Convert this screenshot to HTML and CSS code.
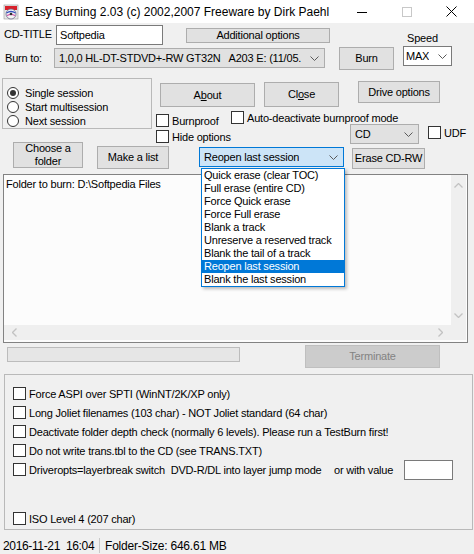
FILE: index.html
```html
<!DOCTYPE html>
<html>
<head>
<meta charset="utf-8">
<title>Easy Burning</title>
<link rel="stylesheet" href="styles.css">
</head>
<body>
<div class="titlebar">
  <svg class="appicon" viewBox="0 0 16 16" width="16" height="16">
    <rect x="1" y="1" width="14" height="14" fill="#e8e8e8" stroke="#9a9a9a" stroke-width="0.6"/>
    <rect x="2" y="2" width="12" height="4" fill="#d8202a"/>
    <circle cx="8" cy="10" r="5" fill="#f4f4f4" stroke="#6a6a8a" stroke-width="0.8"/>
    <path d="M3.5 9 Q8 6 12.5 9" stroke="#3050c0" stroke-width="1.4" fill="none"/>
    <path d="M4 11.5 Q8 9.5 12 11.5" stroke="#d040a0" stroke-width="1.2" fill="none"/>
    <circle cx="8" cy="10" r="1.3" fill="#303030"/>
  </svg>
  <span class="title">Easy Burning 2.03 (c) 2002,2007 Freeware by Dirk Paehl</span>
  <div class="wctrls">
    <span class="wbtn"><svg width="10" height="10" viewBox="0 0 10 10"><path d="M0 5.5H10" stroke="#000" stroke-width="1"/></svg></span>
    <span class="wbtn"><svg width="10" height="10" viewBox="0 0 10 10"><rect x="0.5" y="0.5" width="9" height="9" fill="none" stroke="#c8c8c8"/></svg></span>
    <span class="wbtn"><svg width="11" height="11" viewBox="0 0 11 11"><path d="M0.5 0.5L10.5 10.5M10.5 0.5L0.5 10.5" stroke="#000" stroke-width="1"/></svg></span>
  </div>
</div>

<div class="client">
  <div class="row row1">
    <span class="lbl lbl-cdtitle">CD-TITLE</span>
    <div class="textbox tb-title">Softpedia</div>
    <div class="btn btn-addl">Additional options</div>
    <span class="lbl lbl-speed">Speed</span>
  </div>

  <div class="row row2">
    <span class="lbl lbl-burnto">Burn to:</span>
    <div class="combo combo-drive"><span class="ctext">1,0,0 HL-DT-STDVD+-RW GT32N&nbsp;&nbsp; A203 E: (11/05.</span><svg class="chev" width="9" height="5" viewBox="0 0 9 5"><path d="M0.5 0.5L4.5 4.5L8.5 0.5" fill="none" stroke="#5a5a5a"/></svg></div>
    <div class="btn btn-burn">Burn</div>
    <div class="combo combo-speed"><span class="ctext">MAX</span><svg class="chev" width="9" height="5" viewBox="0 0 9 5"><path d="M0.5 0.5L4.5 4.5L8.5 0.5" fill="none" stroke="#5a5a5a"/></svg></div>
  </div>

  <div class="band1">
    <div class="group radios">
      <div class="radio-row"><span class="radio checked"></span><span>Single session</span></div>
      <div class="radio-row"><span class="radio"></span><span>Start multisession</span></div>
      <div class="radio-row last"><span class="radio"></span><span>Next session</span></div>
    </div>
    <div class="band1-right">
      <div class="r1">
        <div class="btn btn-about">A<u>b</u>out</div>
        <div class="btn btn-close">Cl<u>o</u>se</div>
        <div class="btn btn-drive">Drive options</div>
      </div>
      <div class="r2">
        <div class="chkcol">
          <div class="chk-row burnproof"><span class="chk"></span><span>Burnproof</span></div>
          <div class="chk-row hideopt"><span class="chk"></span><span>Hide options</span></div>
        </div>
        <div class="autocol">
          <div class="chk-row autodeact"><span class="chk"></span><span>Auto-deactivate burnproof mode</span></div>
          <div class="cdrow">
            <div class="combo combo-cd"><span class="ctext">CD</span><svg class="chev" width="9" height="5" viewBox="0 0 9 5"><path d="M0.5 0.5L4.5 4.5L8.5 0.5" fill="none" stroke="#5a5a5a"/></svg></div>
            <div class="chk-row udf"><span class="chk"></span><span>UDF</span></div>
          </div>
        </div>
      </div>
    </div>
  </div>

  <div class="band2">
    <div class="btn btn-choose">Choose a<br>folder</div>
    <div class="btn btn-list">Make a list</div>
    <div class="combo-wrap">
      <div class="combo combo-erase"><span class="ctext">Reopen last session</span><svg class="chev" width="9" height="5" viewBox="0 0 9 5"><path d="M0.5 0.5L4.5 4.5L8.5 0.5" fill="none" stroke="#5a5a5a"/></svg></div>
      <ul class="dropdown">
        <li>Quick erase (clear TOC)</li>
        <li>Full erase (entire CD)</li>
        <li>Force Quick erase</li>
        <li>Force Full erase</li>
        <li>Blank a track</li>
        <li>Unreserve a reserved track</li>
        <li>Blank the tail of a track</li>
        <li class="sel">Reopen last session</li>
        <li>Blank the last session</li>
      </ul>
    </div>
    <div class="btn btn-erase">Erase CD-RW</div>
  </div>

  <div class="listbox">
    <div class="lb-content">Folder to burn: D:\Softpedia Files</div>
    <div class="vscroll">
      <svg width="9" height="5" viewBox="0 0 9 5"><path d="M0.5 4.5L4.5 0.5L8.5 4.5" fill="none" stroke="#c2c2c2" stroke-width="1.3"/></svg>
      <svg width="9" height="5" viewBox="0 0 9 5"><path d="M0.5 0.5L4.5 4.5L8.5 0.5" fill="none" stroke="#c2c2c2" stroke-width="1.3"/></svg>
    </div>
    <div class="hscroll">
      <svg width="5" height="9" viewBox="0 0 5 9"><path d="M4.5 0.5L0.5 4.5L4.5 8.5" fill="none" stroke="#c2c2c2" stroke-width="1.3"/></svg>
      <svg width="5" height="9" viewBox="0 0 5 9"><path d="M0.5 0.5L4.5 4.5L0.5 8.5" fill="none" stroke="#c2c2c2" stroke-width="1.3"/></svg>
    </div>
    <div class="corner"></div>
  </div>

  <div class="row progress-row">
    <div class="progress"></div>
    <div class="btn btn-term">Terminate</div>
  </div>

  <div class="group options">
    <div class="opt-row"><span class="chk"></span><span>Force ASPI over SPTI (WinNT/2K/XP only)</span></div>
    <div class="opt-row"><span class="chk"></span><span>Long Joliet filenames (103 char) - NOT Joliet standard (64 char)</span></div>
    <div class="opt-row"><span class="chk"></span><span>Deactivate folder depth check (normally 6 levels). Please run a TestBurn first!</span></div>
    <div class="opt-row"><span class="chk"></span><span>Do not write trans.tbl to the CD (see TRANS.TXT)</span></div>
    <div class="opt-row"><span class="chk"></span><span class="lj-label">Driveropts=layerbreak switch&nbsp; DVD-R/DL into layer jump mode</span><span class="orval">or with value</span><div class="textbox tb-value"></div></div>
    <div class="opt-row iso"><span class="chk"></span><span>ISO Level 4 (207 char)</span></div>
  </div>

  <div class="statusbar">
    <span class="sb-date">2016-11-21&nbsp; 16:04</span>
    <span class="sb-sep"></span>
    <span class="sb-size">Folder-Size: 646.61 MB</span>
  </div>
</div>
</body>
</html>
```

FILE: styles.css
```css
* { box-sizing: border-box; }
html, body { margin: 0; padding: 0; }
body {
  width: 474px;
  height: 554px;
  overflow: hidden;
  background: #f0f0f0;
  font-family: "Liberation Sans", Arial, sans-serif;
  font-size: 11px;
  letter-spacing: -0.2px;
  color: #000;
}

/* title bar */
.titlebar {
  height: 23px;
  background: #fff;
  display: flex;
  align-items: center;
}
.appicon { margin-left: 3px; flex: none; }
.title {
  margin-left: 6px;
  font-size: 12px;
  letter-spacing: 0;
  white-space: nowrap;
}
.wctrls { margin-left: auto; display: flex; height: 23px; }
.wbtn {
  width: 45px;
  height: 23px;
  display: flex;
  align-items: center;
  justify-content: center;
}

/* generic */
.row { display: flex; align-items: flex-start; }
.lbl { line-height: 13px; white-space: nowrap; flex: none; }
.btn {
  flex: none;
  display: flex;
  align-items: center;
  justify-content: center;
  text-align: center;
  background: #e1e1e1;
  border: 1px solid #adadad;
  line-height: 13px;
  white-space: nowrap;
}
.btn u { text-decoration: underline; text-underline-offset: 1px; }
.combo {
  flex: none;
  display: flex;
  align-items: center;
  background: #e1e1e1;
  border: 1px solid #adadad;
  padding-left: 4px;
  white-space: nowrap;
  overflow: hidden;
}
.combo .ctext { overflow: hidden; }
.combo .chev { margin-left: auto; margin-right: 5px; flex: none; }
.textbox {
  flex: none;
  display: flex;
  align-items: center;
  background: #fff;
  border: 1px solid #7a7a7a;
  padding-left: 3px;
}
.chk {
  flex: none;
  display: inline-block;
  width: 13px;
  height: 13px;
  background: #fff;
  border: 1px solid #333;
}
.chk-row { display: flex; align-items: center; height: 13px; white-space: nowrap; }
.chk-row .chk { margin-right: 3px; }
.group { border: 1px solid #b9b9b9; }

/* row 1 */
.row1 { margin-top: 2px; height: 21px; }
.lbl-cdtitle { margin-left: 4px; width: 52px; margin-top: 3px; }
.tb-title { width: 107px; height: 20px; }
.btn-addl { margin-left: 23px; width: 144px; height: 15px; margin-top: 3px; }
.lbl-speed { margin-left: 77px; margin-top: 7px; }

/* row 2 */
.row2 { height: 24px; }
.lbl-burnto { margin-left: 5px; width: 49px; margin-top: 6px; }
.combo-drive { width: 271px; height: 20px; margin-top: 2px; }
.btn-burn { margin-left: 14px; width: 55px; height: 23px; margin-top: 1px; }
.combo-speed { margin-left: 9px; width: 49px; height: 20px; background: #fff; border-color: #7a7a7a; padding-left: 2px; }
.combo-speed .chev { margin-right: 4px; }

/* band 1 */
.band1 { display: flex; align-items: flex-start; height: 64px; margin-top: 8px; }
.radios {
  margin-left: 2px;
  width: 150px;
  height: 51px;
  padding: 7px 0 0 4px;
  flex: none;
}
.radio-row { display: flex; align-items: center; height: 14px; white-space: nowrap; }
.radio-row.last { height: 13px; }
.radio {
  flex: none;
  width: 12px;
  height: 12px;
  border-radius: 50%;
  border: 1px solid #333;
  background: #fff;
  margin-right: 6px;
  display: flex;
  align-items: center;
  justify-content: center;
}
.radio.checked::after {
  content: "";
  width: 6px;
  height: 6px;
  border-radius: 50%;
  background: #333;
}
.band1-right { display: flex; flex-direction: column; }
.r1 { display: flex; align-items: flex-start; height: 29px; }
.btn-about { margin-left: 8px; margin-top: 5px; width: 95px; height: 24px; }
.btn-close { margin-left: 9px; margin-top: 4px; width: 75px; height: 25px; }
.btn-drive { margin-left: 19px; margin-top: 3px; width: 82px; height: 22px; }
.r2 { display: flex; align-items: flex-start; }
.chkcol { margin-left: 4px; width: 75px; flex: none; }
.burnproof { margin-top: 7px; }
.hideopt { margin-top: 3px; }
.autocol { display: flex; flex-direction: column; }
.autodeact { margin-top: 4px; }
.cdrow { display: flex; align-items: flex-start; }
.combo-cd { margin-left: 119px; width: 69px; height: 20px; }
.udf { margin-left: 9px; margin-top: 2px; }

/* band 2 */
.band2 { display: flex; align-items: flex-start; height: 27px; }
.btn-choose { margin-left: 13px; width: 70px; height: 26px; }
.btn-list { margin-left: 14px; margin-top: 4px; width: 72px; height: 23px; }
.combo-wrap { position: relative; margin-left: 30px; margin-top: 5px; }
.combo-erase { width: 145px; height: 20px; background: #cce4f7; border-color: #0078d7; }
.btn-erase { margin-left: 8px; margin-top: 6px; width: 73px; height: 21px; }
.dropdown {
  position: absolute;
  left: 2px;
  top: 21px;
  width: 144px;
  margin: 0;
  padding: 0;
  list-style: none;
  background: #fff;
  border: 1px solid #0078d7;
  box-shadow: 2px 2px 3px rgba(0,0,0,0.25);
  z-index: 5;
}
.dropdown li { height: 13px; line-height: 13px; padding-left: 2px; white-space: nowrap; }
.dropdown li.sel { background: #0078d7; color: #fff; }

/* list box */
.listbox {
  margin: 5px 0 0 3px;
  width: 465px;
  height: 169px;
  border: 1px solid #828282;
  background: #fcfcfc;
  display: grid;
  grid-template-columns: 1fr 15px;
  grid-template-rows: 1fr 15px;
  padding: 0 1px 2px 0;
}
.lb-content { padding: 3px 0 0 2px; line-height: 13px; }
.vscroll, .hscroll, .corner { background: #efefef; }
.vscroll {
  display: flex;
  flex-direction: column;
  align-items: center;
  justify-content: space-between;
  padding: 8px 0 7px;
}
.hscroll {
  display: flex;
  align-items: center;
  justify-content: space-between;
  padding: 0 8px 0 8px;
}

/* progress */
.progress-row { height: 25px; }
.progress {
  margin-left: 7px;
  margin-top: 4px;
  width: 233px;
  height: 15px;
  background: #e6e6e6;
  border: 1px solid #bcbcbc;
}
.btn-term {
  margin-left: 65px;
  margin-top: 2px;
  width: 135px;
  height: 23px;
  background: #cccccc;
  border-color: #bfbfbf;
  color: #838383;
}

/* options group */
.options {
  margin: 6px 0 0 4px;
  width: 469px;
  height: 156px;
  padding: 9px 0 0 8px;
}
.opt-row { display: flex; align-items: center; height: 19px; white-space: nowrap; }
.opt-row .chk { margin-right: 3px; }
.opt-row.iso { margin-top: 30px; }
.lj-label { width: 305px; }
.orval { width: 70px; }
.tb-value { width: 49px; height: 20px; }

/* status bar */
.statusbar {
  margin-top: 7px;
  height: 17px;
  display: flex;
  align-items: center;
  font-size: 12px;
  letter-spacing: -0.35px;
  white-space: nowrap;
}
.sb-date { margin-left: 3px; width: 96px; }
.sb-sep { width: 1px; height: 15px; background: #c8c8c8; }
.sb-size { margin-left: 5px; letter-spacing: -0.2px; }
```
